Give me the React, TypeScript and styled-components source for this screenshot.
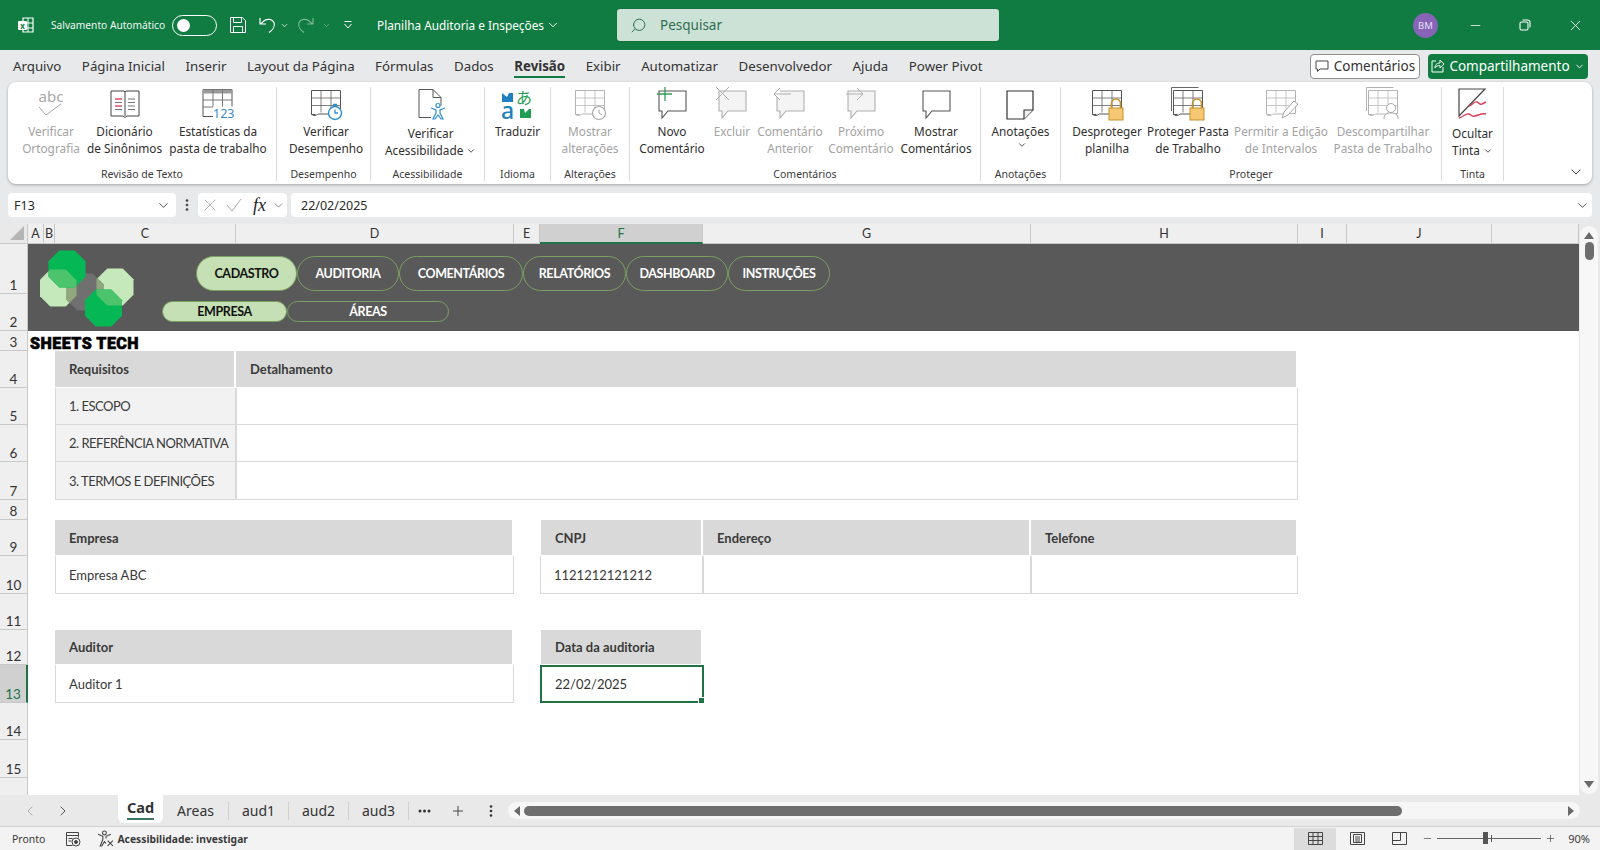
import { ReactNode } from "react";
import styled, { createGlobalStyle } from "styled-components";
import { ChevronDown, ChevronLeft, ChevronRight, Minus, Plus, Search, X } from "lucide-react";

const GlobalStyle = createGlobalStyle`
  html, body {
    margin: 0;
    padding: 0;
    background: #fff;
    overflow: hidden;
  }
  * { box-sizing: border-box; }
`;

const UI_FONT = `"Noto Sans", "Open Sans", sans-serif`;
const CELL_FONT = `Lato, "Noto Sans", sans-serif`;

const Page = styled.div`
  width: 1600px;
  height: 850px;
  display: flex;
  flex-direction: column;
  font-family: ${UI_FONT};
  color: #2b2b2b;
  background: #e8e9eb;
  overflow: hidden;
`;

/* ---------- title bar ---------- */
const TitleBar = styled.div`
  height: 50px;
  flex: none;
  background: #107c41;
  display: flex;
  align-items: center;
  color: #fff;
  padding-left: 17px;
`;

const AutoSave = styled.span`
  font-size: 10.2px;
  margin-left: 16px;
  width: 121px;
  white-space: nowrap;
  color: #eef6f1;
`;

const Toggle = styled.div`
  width: 45px;
  height: 21px;
  border: 1.2px solid #fff;
  border-radius: 11px;
  padding: 3px 4px;
`;

const ToggleKnob = styled.div`
  width: 13px;
  height: 13px;
  background: #fff;
  border-radius: 50%;
`;

const TitleIcon = styled.span<{ $left: number; $right?: number; $dim?: boolean }>`
  display: flex;
  align-items: center;
  margin-left: ${(p) => p.$left}px;
  margin-right: ${(p) => p.$right ?? 0}px;
  opacity: ${(p) => (p.$dim ? 0.45 : 1)};
`;

const DocName = styled.span`
  margin-left: 24px;
  font-size: 11.8px;
  width: 169px;
  white-space: nowrap;
`;

const SearchBox = styled.div`
  margin-left: 57px;
  width: 382px;
  height: 32px;
  background: #cde2d7;
  border-radius: 3px;
  box-shadow: 0 0 1px rgba(0, 0, 0, 0.5);
  display: flex;
  align-items: center;
  padding-left: 13px;
  gap: 13px;
  color: #2e6f50;
  font-size: 13.5px;
`;

const SearchGlyph = styled(Search)`
  transform: scaleX(-1);
`;

const Avatar = styled.div`
  margin-left: auto;
  margin-right: 12px;
  width: 25px;
  height: 25px;
  border-radius: 50%;
  background: #8764b8;
  display: flex;
  align-items: center;
  justify-content: center;
  font-size: 9.5px;
  color: #e8e0f2;
`;

const WindowButton = styled.div`
  width: 50px;
  height: 50px;
  display: flex;
  align-items: center;
  justify-content: center;
`;

/* ---------- tabs ---------- */
const TabRow = styled.div`
  height: 32px;
  flex: none;
  display: flex;
  align-items: center;
  padding: 0 12px 0 13px;
  gap: 20.5px;
  font-size: 13.3px;
  color: #333;
`;

const Tab = styled.span<{ $active?: boolean }>`
  position: relative;
  font-weight: ${(p) => (p.$active ? 700 : 400)};
  white-space: nowrap;
  &::after {
    content: "";
    display: ${(p) => (p.$active ? "block" : "none")};
    position: absolute;
    left: 0;
    right: 0;
    bottom: -3px;
    height: 2.5px;
    background: #107c41;
  }
`;

const TabActions = styled.div`
  margin-left: auto;
  display: flex;
  gap: 8px;
`;

const CommentsButton = styled.div`
  width: 110px;
  height: 25px;
  background: #fff;
  border: 1px solid #8f8f8f;
  border-radius: 4px;
  display: flex;
  align-items: center;
  justify-content: center;
  gap: 5px;
  font-size: 13.5px;
`;

const ShareButton = styled.div`
  width: 160px;
  height: 25px;
  background: #107c41;
  color: #fff;
  border-radius: 4px;
  display: flex;
  align-items: center;
  justify-content: center;
  gap: 4px;
  font-size: 13.5px;
`;

/* ---------- ribbon ---------- */
const Ribbon = styled.div`
  flex: none;
  height: 102px;
  margin: 0 8px;
  background: #fff;
  border-radius: 8px;
  box-shadow: 0 1px 3px rgba(0, 0, 0, 0.3);
  display: flex;
  padding: 5px 0 3px;
`;

const Group = styled.div<{ $width: number; $last?: boolean }>`
  width: ${(p) => p.$width}px;
  flex: none;
  position: relative;
  display: flex;
  flex-direction: column;
  border-right: ${(p) => (p.$last ? "none" : "1px solid #dcdcdc")};
`;

const GroupButtons = styled.div<{ $inset?: number }>`
  flex: 1;
  display: flex;
  justify-content: ${(p) => (p.$inset === undefined ? "center" : "flex-start")};
  padding-left: ${(p) => p.$inset ?? 0}px;
`;

const GroupLabel = styled.div`
  height: 14px;
  font-size: 10.5px;
  line-height: 14px;
  text-align: center;
  color: #3a3a3a;
`;

const RibbonButton = styled.div<{ $width?: number; $off?: boolean; $low?: boolean }>`
  width: ${(p) => (p.$width ? `${p.$width}px` : "auto")};
  flex: none;
  display: flex;
  flex-direction: column;
  align-items: center;
  font-size: 11.8px;
  line-height: 16.5px;
  color: ${(p) => (p.$off ? "#a3a3a3" : "#2f2f2f")};
  white-space: nowrap;
  & > svg {
    flex: none;
    margin-bottom: ${(p) => (p.$low ? "4px" : "2px")};
  }
`;

const Caret = styled.span`
  display: inline-flex;
  vertical-align: middle;
  margin-left: 3px;
`;

const Collapse = styled.div`
  position: absolute;
  right: 8px;
  bottom: 1px;
  display: flex;
`;

/* ---------- formula bar ---------- */
const FormulaBar = styled.div`
  flex: none;
  height: 40px;
  display: flex;
  align-items: flex-start;
  padding: 9px 8px 0;
`;

const NameBox = styled.div`
  width: 168px;
  height: 24px;
  background: #fff;
  border-radius: 4px;
  display: flex;
  align-items: center;
  justify-content: space-between;
  padding: 0 5px 0 6px;
  font-size: 12.5px;
`;

const Dots = styled.div`
  width: 22px;
  height: 24px;
  display: flex;
  align-items: center;
  justify-content: center;
`;

const FxBox = styled.div`
  width: 89px;
  height: 24px;
  background: #fff;
  border-radius: 4px;
  display: flex;
  align-items: center;
  padding-left: 2px;
  gap: 6px;
`;

const FxLabel = styled.span`
  font-family: "Liberation Serif", serif;
  font-style: italic;
  font-size: 18px;
  line-height: 20px;
  margin-left: 5px;
  color: #222;
`;

const FormulaInput = styled.div`
  margin-left: 4px;
  flex: 1;
  height: 24px;
  background: #fff;
  border-radius: 4px;
  display: flex;
  align-items: center;
  justify-content: space-between;
  padding: 0 2px 0 10px;
  font-size: 12.5px;
`;

/* ---------- sheet ---------- */
const SheetArea = styled.div`
  flex: none;
  height: 571px;
  display: flex;
  background: #fff;
`;

const SheetGrid = styled.div`
  width: 1579px;
  height: 571px;
  display: grid;
  grid-template-columns: 28px 16px 11px 181px 278px 26px 163px 328px 267px 49px 145px 87px;
  grid-template-rows: 20px 50px 37px 20px 37px 37px 37px 38px 20px 36px 38px 36px 35px 38px 37px 38px 38px;
  overflow: hidden;
`;

const Corner = styled.div`
  grid-column: 1;
  grid-row: 1;
  background: #e9e9e9;
  border-right: 1px solid #c8c8c8;
  border-bottom: 1px solid #c8c8c8;
  display: flex;
  align-items: flex-end;
  justify-content: flex-end;
  padding: 0 3px 3px 0;
`;

const ColHeader = styled.div<{ $col: number; $selected?: boolean }>`
  grid-column: ${(p) => p.$col};
  grid-row: 1;
  background: ${(p) => (p.$selected ? "#d0d0d0" : "#efefef")};
  border-right: 1px solid #c8c8c8;
  border-bottom: ${(p) => (p.$selected ? "2px solid #217346" : "1px solid #c8c8c8")};
  font-family: ${CELL_FONT};
  font-size: 12.5px;
  line-height: 19px;
  text-align: center;
  color: ${(p) => (p.$selected ? "#217346" : "#333")};
`;

const RowHeader = styled.div<{ $row: number; $selected?: boolean }>`
  grid-column: 1;
  grid-row: ${(p) => p.$row};
  background: ${(p) => (p.$selected ? "#d0d0d0" : "#efefef")};
  border-right: ${(p) => (p.$selected ? "2px solid #217346" : "1px solid #c8c8c8")};
  border-bottom: 1px solid #c8c8c8;
  font-family: ${CELL_FONT};
  font-size: 13.5px;
  color: ${(p) => (p.$selected ? "#217346" : "#333")};
  display: flex;
  align-items: flex-end;
  justify-content: center;
  overflow: hidden;
`;

const Banner = styled.div`
  grid-column: 2 / -1;
  grid-row: 2 / 4;
  background: #595959;
  display: flex;
  padding: 5px 0 0 12px;
`;

const Logo = styled.svg`
  flex: none;
  width: 95px;
  height: 80px;
`;

const PillStack = styled.div`
  margin-left: 27px;
  display: flex;
  flex-direction: column;
  gap: 10px;
  padding-top: 7px;
`;

const PillRow = styled.div<{ $indent: number }>`
  display: flex;
  margin-left: ${(p) => p.$indent}px;
`;

const Pill = styled.div<{ $width: number; $on?: boolean; $small?: boolean }>`
  width: ${(p) => p.$width}px;
  height: ${(p) => (p.$small ? 21 : 35)}px;
  border-radius: 18px;
  border: 1px solid #7a9f62;
  background: ${(p) => (p.$on ? "#c5e0b4" : "transparent")};
  color: ${(p) => (p.$on ? "#111" : "#fff")};
  font-family: ${CELL_FONT};
  font-weight: 700;
  font-size: 12.5px;
  letter-spacing: -0.4px;
  display: flex;
  align-items: center;
  justify-content: center;
`;

const BrandCell = styled.div`
  grid-column: 2 / 6;
  grid-row: 4;
  padding: 1px 0 0 2px;
  font-family: Roboto, "Liberation Sans", sans-serif;
  font-weight: 900;
  font-size: 16px;
  line-height: 23px;
  letter-spacing: 0.5px;
  color: #000;
  -webkit-text-stroke: 0.6px #000;
  white-space: nowrap;
`;

const Cell = styled.div<{ $col: string; $row: number; $kind: "head" | "label" | "plain" }>`
  grid-column: ${(p) => p.$col};
  grid-row: ${(p) => p.$row};
  display: flex;
  align-items: center;
  padding-left: ${(p) => (p.$kind === "head" ? 14 : 13)}px;
  font-family: ${CELL_FONT};
  font-size: 13px;
  white-space: nowrap;
  color: #3a3a3a;
  letter-spacing: ${(p) => (p.$kind === "label" ? "-0.5px" : "0")};
  font-weight: ${(p) => (p.$kind === "head" ? 700 : 400)};
  background: ${(p) => (p.$kind === "head" ? "#d9d9d9" : p.$kind === "label" ? "#f2f2f2" : "#fff")};
  ${(p) =>
    p.$kind === "head"
      ? `border-right: 2px solid #fff; border-bottom: 1px solid #fff; border-left: ${p.$col === "7" ? "1px" : "0"} solid #fff;`
      : "border: 1px solid #d9d9d9; border-top: none;"}
`;

const ActiveCell = styled.div`
  grid-column: 7;
  grid-row: 14;
  position: relative;
  margin-right: -1px;
  border: 2px solid #217346;
  display: flex;
  align-items: center;
  padding-left: 13px;
  font-family: ${CELL_FONT};
  font-size: 13px;
  color: #333;
  &::after {
    content: "";
    position: absolute;
    right: -3px;
    bottom: -3px;
    width: 5px;
    height: 5px;
    background: #217346;
    border: 1px solid #fff;
  }
`;

const VScroll = styled.div`
  width: 21px;
  display: flex;
  background: #e9e9e9;
  padding: 2px 2px 1px 1px;
`;

const VTrack = styled.div`
  flex: 1;
  display: flex;
  flex-direction: column;
  align-items: center;
  background: #f7f7f7;
  border-radius: 9px;
  padding: 6px 0 6px;
`;

const VThumb = styled.div`
  width: 9px;
  height: 18px;
  border-radius: 5px;
  background: #6e6e6e;
  margin-top: 3px;
`;

const Arrow = styled.div<{ $dir: "up" | "down" | "left" | "right" }>`
  width: 0;
  height: 0;
  flex: none;
  ${(p) =>
    p.$dir === "up"
      ? "border-left: 5px solid transparent; border-right: 5px solid transparent; border-bottom: 7px solid #6a6a6a;"
      : p.$dir === "down"
      ? "border-left: 5px solid transparent; border-right: 5px solid transparent; border-top: 7px solid #6a6a6a;"
      : p.$dir === "left"
      ? "border-top: 5px solid transparent; border-bottom: 5px solid transparent; border-right: 6px solid #6a6a6a;"
      : "border-top: 5px solid transparent; border-bottom: 5px solid transparent; border-left: 6px solid #6a6a6a;"}
`;

const Spacer = styled.div`
  flex: 1;
`;

/* ---------- sheet tabs ---------- */
const SheetTabsBar = styled.div`
  flex: none;
  height: 32px;
  display: flex;
  align-items: center;
  background: #e9e9e9;
  border-bottom: 1px solid #d2d2d2;
`;

const NavArrows = styled.div`
  width: 118px;
  display: flex;
  padding-left: 22px;
  gap: 17px;
  flex: none;
`;

const SheetTab = styled.div<{ $width: number; $active?: boolean }>`
  width: ${(p) => p.$width}px;
  height: ${(p) => (p.$active ? "28px" : "18px")};
  flex: none;
  align-self: ${(p) => (p.$active ? "flex-start" : "center")};
  padding-bottom: ${(p) => (p.$active ? "4px" : "0")};
  display: flex;
  align-items: center;
  justify-content: center;
  position: relative;
  font-size: ${(p) => (p.$active ? "14.5px" : "14px")};
  font-weight: ${(p) => (p.$active ? 700 : 400)};
  color: #333;
  background: ${(p) => (p.$active ? "#fff" : "transparent")};
  border-radius: ${(p) => (p.$active ? "0 0 6px 6px" : "0")};
  border-right: ${(p) => (p.$active ? "none" : "1px solid #d0d0d0")};
  ${(p) =>
    p.$active &&
    `&::after {
      content: "";
      position: absolute;
      left: 9px;
      right: 9px;
      bottom: 3px;
      height: 2px;
      background: #3d7560;
    }`}
`;

const TabTool = styled.div<{ $left: number }>`
  margin-left: ${(p) => p.$left}px;
  display: flex;
  align-items: center;
  justify-content: center;
  width: 16px;
  flex: none;
  color: #333;
`;

const HScroll = styled.div`
  margin-left: 9px;
  width: 1072px;
  height: 17px;
  background: #f6f6f6;
  border-radius: 9px;
  display: flex;
  align-items: center;
  padding: 0 6px;
  flex: none;
`;

const HThumb = styled.div`
  margin-left: 4px;
  width: 878px;
  height: 10px;
  border-radius: 5px;
  background: #6e6e6e;
`;

/* ---------- status bar ---------- */
const StatusBar = styled.div`
  flex: 1;
  display: flex;
  align-items: center;
  background: #f3f3f3;
  font-size: 10.5px;
  padding-left: 12px;
`;

const StatusText = styled.span<{ $bold?: boolean }>`
  font-weight: ${(p) => (p.$bold ? 700 : 400)};
  font-size: ${(p) => (p.$bold ? "10.3px" : "10.5px")};
  color: #3a3a3a;
  white-space: nowrap;
`;

const ViewButton = styled.div<{ $on?: boolean }>`
  width: 42px;
  height: 22px;
  flex: none;
  display: flex;
  align-items: center;
  justify-content: center;
  background: ${(p) => (p.$on ? "#dcdcdc" : "transparent")};
`;

const ZoomControl = styled.div`
  margin-left: auto;
  display: flex;
  align-items: center;
  height: 100%;
`;

const ZoomMinus = styled(Minus)`
  margin-left: 2px;
`;

const SliderTrack = styled.div`
  position: relative;
  width: 104px;
  height: 1px;
  background: #666;
  margin: 0 4px;
`;

const SliderKnob = styled.div`
  position: absolute;
  left: 46px;
  top: -6px;
  width: 5px;
  height: 12px;
  background: #555;
`;

const SliderTick = styled.div`
  position: absolute;
  left: 54px;
  top: -3px;
  width: 1px;
  height: 7px;
  background: #555;
`;

const ZoomValue = styled.span`
  width: 42px;
  text-align: center;
  margin-left: 2px;
  color: #3a3a3a;
  font-size: 11px;
`;

/* ---------- drawings ---------- */
type IconProps = { c?: string };

const Svg = ({ children }: { children: ReactNode }) => (
  <svg width={34} height={34} viewBox="0 0 34 34" fill="none" overflow="visible">
    {children}
  </svg>
);

const SheetLines = ({ c = "#555" }: IconProps) => (
  <>
    <path d="M2.5 3.500h29v23H25M2.500 3.500v24h4" stroke={c} />
    <path d="M2.500 11h29M2.500 18.500h29M12 3.500v22M22 3.500v23" stroke={c} opacity="0.75" />
    <path d="M2.500 27c2 3 5 1 7 0h12" stroke={c} />
  </>
);

const Lock = () => (
  <>
    <rect x="19" y="21" width="14" height="12" fill="#f6c874" stroke="#c78f2c" />
    <path d="M21.500 21v-4.500a4.500 4.500 0 0 1 9 0V21" stroke="#c78f2c" strokeWidth="1.6" />
  </>
);

const Bubble = ({ c = "#555", fill = "none" }: IconProps & { fill?: string }) => (
  <path d="M4 4h27v20H13l-6 7v-7H4z" stroke={c} fill={fill} strokeWidth="1.1" />
);

const icons = {
  abc: (
    <Svg>
      <text x="17" y="15" textAnchor="middle" fontFamily="Noto Sans" fontSize="15" fill="#a8a8a8">
        abc
      </text>
      <path d="M5 20l7 8L27 17" stroke="#a8a8a8" />
    </Svg>
  ),
  book: (
    <Svg>
      <path d="M3 4h13l1 1 1-1h13v25H19l-2 1.500L15 29H3z" stroke="#444" />
      <path d="M17 5v24" stroke="#444" />
      <path d="M7 12h7M7 19h7" stroke="#e0506a" strokeWidth="1.3" />
      <path d="M7 15.500h7M7 22.500h7M20 12h7M20 15.500h7M20 19h7M20 22.500h7" stroke="#777" strokeWidth="1.2" />
    </Svg>
  ),
  stats: (
    <Svg>
      <path d="M2 2.500h29M2 2.500v27h10M31 2.500v17" stroke="#555" />
      <rect x="2" y="2.500" width="29" height="4" fill="#9a9a9a" />
      <path d="M2 13h29M2 20h10M12 2.500v17M21.500 2.500v17" stroke="#777" />
      <text x="12" y="31" fontFamily="Noto Sans" fontSize="12.5" fill="#3c8ac4">
        123
      </text>
    </Svg>
  ),
  perf: (
    <Svg>
      <SheetLines />
      <circle cx="26" cy="26" r="6.500" fill="#fff" stroke="#2f8fce" strokeWidth="1.4" />
      <path d="M26 22.500V26h3M24 17.500h4M26 17.500v2" stroke="#2f8fce" strokeWidth="1.3" />
    </Svg>
  ),
  access: (
    <Svg>
      <path d="M5 2.500h14l8 8v8M5 2.500v28h12M19 2.500v8h8" stroke="#555" />
      <circle cx="24" cy="18.500" r="2" stroke="#2f8fce" strokeWidth="1.2" />
      <path d="M17 21l5 2v3l-3 6h2l3-4 3 4h2l-3-6v-3l5-2" stroke="#2f8fce" strokeWidth="1.2" />
    </Svg>
  ),
  translate: (
    <Svg>
      <path d="M2 6l5 4 2-4h4v9H2z" fill="#1f7fc1" />
      <text x="16" y="17" fontFamily="Noto Sans CJK JP" fontSize="16" fill="#1f9d55">
        あ
      </text>
      <text x="1" y="32" fontFamily="Noto Sans" fontWeight="500" fontSize="23" fill="#1f7fc1">
        a
      </text>
      <path d="M31 31H20v-9h4l1 4 4-4h2z" fill="#1f9d55" />
    </Svg>
  ),
  changes: (
    <Svg>
      <SheetLines c="#b4b4b4" />
      <circle cx="26" cy="26" r="6.500" fill="#fff" stroke="#a8a8a8" strokeWidth="1.2" />
      <path d="M26 22.500V26l3 2" stroke="#a8a8a8" />
    </Svg>
  ),
  newComment: (
    <Svg>
      <Bubble />
      <path d="M10 0v14M2 7h15" stroke="#2e9e5b" strokeWidth="1.3" />
    </Svg>
  ),
  delComment: (
    <Svg>
      <Bubble c="#b0b0b0" fill="#f4f4f4" />
      <path d="M1 0l13 13M14 0L1 13" stroke="#b0b0b0" />
    </Svg>
  ),
  prevComment: (
    <Svg>
      <Bubble c="#b0b0b0" fill="#f4f4f4" />
      <path d="M1 7h17M7 1L1 7l6 6" stroke="#b0b0b0" fill="#fff" />
    </Svg>
  ),
  nextComment: (
    <Svg>
      <Bubble c="#b0b0b0" fill="#f4f4f4" />
      <path d="M2 7h17M13 1l6 6-6 6" stroke="#b0b0b0" />
    </Svg>
  ),
  showComment: (
    <Svg>
      <Bubble />
    </Svg>
  ),
  note: (
    <Svg>
      <path d="M4 4h26v19l-9 9H4z" stroke="#333" strokeWidth="1.2" />
      <path d="M30 23h-9v9" fill="#efefef" stroke="#333" strokeWidth="1.1" />
    </Svg>
  ),
  unprotect: (
    <Svg>
      <SheetLines />
      <Lock />
    </Svg>
  ),
  protect: (
    <Svg>
      <path d="M0.500 24V0.500h27" stroke="#666" />
      <SheetLines />
      <Lock />
    </Svg>
  ),
  allow: (
    <Svg>
      <SheetLines c="#b4b4b4" />
      <path d="M18 31l2-6 10-11 4 3-10 11z" fill="#fff" stroke="#a8a8a8" />
    </Svg>
  ),
  unshare: (
    <Svg>
      <path d="M0.500 24V0.500h27" stroke="#b4b4b4" />
      <SheetLines c="#b4b4b4" />
      <circle cx="25" cy="21" r="4.500" fill="#fff" stroke="#a8a8a8" />
      <path d="M18 32c0-5 3-6 7-6s7 1 7 6" fill="#fff" stroke="#a8a8a8" />
    </Svg>
  ),
  ink: (
    <Svg>
      <path d="M3 2h26L3 29z" stroke="#444" strokeWidth="1.2" />
      <path d="M13 19c4-1 5-5 8-4s2 3 5 2l4-2" stroke="#d8405a" strokeWidth="1.4" />
      <path d="M3 31c4-1 7-5 10-4s2 3 6 2 7-3 11-2" stroke="#d8405a" strokeWidth="1.4" />
    </Svg>
  ),
};

const SmallCaret = () => (
  <Caret>
    <ChevronDown size={10} strokeWidth={2} />
  </Caret>
);

const Tabs = [
  "Arquivo",
  "Página Inicial",
  "Inserir",
  "Layout da Página",
  "Fórmulas",
  "Dados",
  "Revisão",
  "Exibir",
  "Automatizar",
  "Desenvolvedor",
  "Ajuda",
  "Power Pivot",
];

const columns = ["A", "B", "C", "D", "E", "F", "G", "H", "I", "J"];

const rowNumbers = [1, 2, 3, 4, 5, 6, 7, 8, 9, 10, 11, 12, 13, 14, 15];

const cells: { col: string; row: number; kind: "head" | "label" | "plain"; text?: string }[] = [
  { col: "4", row: 5, kind: "head", text: "Requisitos" },
  { col: "5 / 10", row: 5, kind: "head", text: "Detalhamento" },
  { col: "4", row: 6, kind: "label", text: "1. ESCOPO" },
  { col: "5 / 10", row: 6, kind: "plain" },
  { col: "4", row: 7, kind: "label", text: "2. REFERÊNCIA NORMATIVA" },
  { col: "5 / 10", row: 7, kind: "plain" },
  { col: "4", row: 8, kind: "label", text: "3. TERMOS E DEFINIÇÕES" },
  { col: "5 / 10", row: 8, kind: "plain" },
  { col: "4 / 6", row: 10, kind: "head", text: "Empresa" },
  { col: "7", row: 10, kind: "head", text: "CNPJ" },
  { col: "8", row: 10, kind: "head", text: "Endereço" },
  { col: "9", row: 10, kind: "head", text: "Telefone" },
  { col: "4 / 6", row: 11, kind: "plain", text: "Empresa ABC" },
  { col: "7", row: 11, kind: "plain", text: "1121212121212" },
  { col: "8", row: 11, kind: "plain" },
  { col: "9", row: 11, kind: "plain" },
  { col: "4 / 6", row: 13, kind: "head", text: "Auditor" },
  { col: "7", row: 13, kind: "head", text: "Data da auditoria" },
  { col: "4 / 6", row: 14, kind: "plain", text: "Auditor 1" },
];

const octagonPoints = (x: number, y: number, r: number) => {
  const k = r * 0.42;
  return `${x - k},${y - r} ${x + k},${y - r} ${x + r},${y - k} ${x + r},${y + k} ${x + k},${y + r} ${x - k},${y + r} ${x - r},${y + k} ${x - r},${y - k}`;
};

const leftOct = octagonPoints(18, 39, 18.5);
const rightOct = octagonPoints(75, 38, 18.5);
const grayOct = octagonPoints(45, 43, 18.5);
const topOct = octagonPoints(27, 20, 18.5);
const bottomOct = octagonPoints(63.5, 59, 18.5);

const BrandLogo = () => (
  <Logo viewBox="0 0 95 80">
    <defs>
      <clipPath id="clip-left">
        <polygon points={leftOct} />
      </clipPath>
      <clipPath id="clip-right">
        <polygon points={rightOct} />
      </clipPath>
    </defs>
    <polygon points={leftOct} fill="#c6e9bb" />
    <polygon points={rightOct} fill="#c6e9bb" />
    <polygon points={grayOct} fill="#707070" />
    <polygon points={grayOct} fill="#8fa97d" clipPath="url(#clip-left)" />
    <polygon points={grayOct} fill="#8fa97d" clipPath="url(#clip-right)" />
    <polygon points={topOct} fill="#06b755" />
    <polygon points={topOct} fill="#4cc46c" clipPath="url(#clip-left)" />
    <polygon points={bottomOct} fill="#06b755" />
    <polygon points={bottomOct} fill="#4cc46c" clipPath="url(#clip-right)" />
  </Logo>
);

export default function App() {
  return (
    <Page>
      <GlobalStyle />
      <TitleBar>
        <svg width="18" height="18" viewBox="0 0 18 18" fill="none">
          <path d="M6 2h10v14H6z" stroke="#fff" strokeWidth="1.2" />
          <path d="M11 2v14M6 7h10M6 12h10" stroke="#fff" />
          <rect x="1" y="5" width="9" height="9" rx="1" fill="#fff" />
          <text x="5.500" y="12.500" textAnchor="middle" fontSize="8" fontFamily="Noto Sans" fontWeight="700" fill="#107c41">
            x
          </text>
        </svg>
        <AutoSave>Salvamento Automático</AutoSave>
        <Toggle>
          <ToggleKnob />
        </Toggle>
        <TitleIcon $left={12}>
          <svg width="18" height="18" viewBox="0 0 18 18" fill="none" stroke="#fff">
            <path d="M1.500 1.500h12l3 3v12h-15z" />
            <path d="M4.500 1.500v5h8v-5M4.500 16.500v-6h9v6" />
          </svg>
        </TitleIcon>
        <TitleIcon $left={12}>
          <svg width="20" height="18" viewBox="0 0 20 18" fill="none" stroke="#fff" strokeWidth="1.2">
            <path d="M1 2v6h6M1.500 8l4-3.500c3-2 8-1.500 9.500 2 1.500 4-2 8-5 10" />
          </svg>
        </TitleIcon>
        <TitleIcon $left={1}>
          <ChevronDown size={9} strokeWidth={2} />
        </TitleIcon>
        <TitleIcon $left={5} $dim>
          <svg width="20" height="18" viewBox="0 0 20 18" fill="none" stroke="#fff" strokeWidth="1.2">
            <path d="M19 2v6h-6M18.500 8l-4-3.500c-3-2-8-1.500-9.500 2-1.500 4 2 8 5 10" />
          </svg>
        </TitleIcon>
        <TitleIcon $left={8} $dim>
          <ChevronDown size={9} strokeWidth={2} />
        </TitleIcon>
        <TitleIcon $left={12}>
          <svg width="10" height="10" viewBox="0 0 10 10" fill="none" stroke="#fff">
            <path d="M1.500 1.500h7M1.500 4l3.500 4 3.500-4" />
          </svg>
        </TitleIcon>
        <DocName>Planilha Auditoria e Inspeções</DocName>
        <TitleIcon $left={0}>
          <ChevronDown size={14} strokeWidth={1.6} />
        </TitleIcon>
        <SearchBox>
          <SearchGlyph size={17} strokeWidth={1.4} />
          Pesquisar
        </SearchBox>
        <Avatar>BM</Avatar>
        <WindowButton>
          <Minus size={15} strokeWidth={1.2} />
        </WindowButton>
        <WindowButton>
          <svg width="12" height="12" viewBox="0 0 12 12" fill="none" stroke="#fff" strokeWidth="1.1">
            <rect x="1" y="3" width="8" height="8" rx="1.500" />
            <path d="M3.500 1h5a2.500 2.500 0 0 1 2.500 2.500v5" />
          </svg>
        </WindowButton>
        <WindowButton>
          <X size={17} strokeWidth={1.2} />
        </WindowButton>
      </TitleBar>

      <TabRow>
        {Tabs.map((t) => (
          <Tab key={t} $active={t === "Revisão"}>
            {t}
          </Tab>
        ))}
        <TabActions>
          <CommentsButton>
            <svg width="14" height="14" viewBox="0 0 14 14" fill="none" stroke="#444">
              <path d="M1 2h12v8H5l-2.500 2.500V10H1z" />
            </svg>
            Comentários
          </CommentsButton>
          <ShareButton>
            <svg width="14" height="14" viewBox="0 0 14 14" fill="none" stroke="#fff">
              <path d="M5 2H1v11h11V8M4 9c0-4 3-5 5-5V1l4 4-4 4V6.500C7 6.500 5 7 4 9z" />
            </svg>
            Compartilhamento
            <ChevronDown size={11} strokeWidth={2} />
          </ShareButton>
        </TabActions>
      </TabRow>

      <Ribbon>
        <Group $width={269}>
          <GroupButtons $inset={10}>
            <RibbonButton $width={66} $off>
              {icons.abc}
              <span>Verificar</span>
              <span>Ortografia</span>
            </RibbonButton>
            <RibbonButton $width={81}>
              {icons.book}
              <span>Dicionário</span>
              <span>de Sinônimos</span>
            </RibbonButton>
            <RibbonButton $width={106}>
              {icons.stats}
              <span>Estatísticas da</span>
              <span>pasta de trabalho</span>
            </RibbonButton>
          </GroupButtons>
          <GroupLabel>Revisão de Texto</GroupLabel>
        </Group>
        <Group $width={94}>
          <GroupButtons $inset={12}>
            <RibbonButton>
              {icons.perf}
              <span>Verificar</span>
              <span>Desempenho</span>
            </RibbonButton>
          </GroupButtons>
          <GroupLabel>Desempenho</GroupLabel>
        </Group>
        <Group $width={114}>
          <GroupButtons $inset={14}>
            <RibbonButton $low>
              {icons.access}
              <span>Verificar</span>
              <span>
                Acessibilidade
                <SmallCaret />
              </span>
            </RibbonButton>
          </GroupButtons>
          <GroupLabel>Acessibilidade</GroupLabel>
        </Group>
        <Group $width={66}>
          <GroupButtons>
            <RibbonButton>
              {icons.translate}
              <span>Traduzir</span>
            </RibbonButton>
          </GroupButtons>
          <GroupLabel>Idioma</GroupLabel>
        </Group>
        <Group $width={79}>
          <GroupButtons>
            <RibbonButton $off>
              {icons.changes}
              <span>Mostrar</span>
              <span>alterações</span>
            </RibbonButton>
          </GroupButtons>
          <GroupLabel>Alterações</GroupLabel>
        </Group>
        <Group $width={351}>
          <GroupButtons $inset={6}>
            <RibbonButton $width={72}>
              {icons.newComment}
              <span>Novo</span>
              <span>Comentário</span>
            </RibbonButton>
            <RibbonButton $width={48} $off>
              {icons.delComment}
              <span>Excluir</span>
            </RibbonButton>
            <RibbonButton $width={68} $off>
              {icons.prevComment}
              <span>Comentário</span>
              <span>Anterior</span>
            </RibbonButton>
            <RibbonButton $width={74} $off>
              {icons.nextComment}
              <span>Próximo</span>
              <span>Comentário</span>
            </RibbonButton>
            <RibbonButton $width={76}>
              {icons.showComment}
              <span>Mostrar</span>
              <span>Comentários</span>
            </RibbonButton>
          </GroupButtons>
          <GroupLabel>Comentários</GroupLabel>
        </Group>
        <Group $width={80}>
          <GroupButtons>
            <RibbonButton>
              {icons.note}
              <span>Anotações</span>
              <SmallCaret />
            </RibbonButton>
          </GroupButtons>
          <GroupLabel>Anotações</GroupLabel>
        </Group>
        <Group $width={381}>
          <GroupButtons $inset={6}>
            <RibbonButton $width={80}>
              {icons.unprotect}
              <span>Desproteger</span>
              <span>planilha</span>
            </RibbonButton>
            <RibbonButton $width={82}>
              {icons.protect}
              <span>Proteger Pasta</span>
              <span>de Trabalho</span>
            </RibbonButton>
            <RibbonButton $width={104} $off>
              {icons.allow}
              <span>Permitir a Edição</span>
              <span>de Intervalos</span>
            </RibbonButton>
            <RibbonButton $width={100} $off>
              {icons.unshare}
              <span>Descompartilhar</span>
              <span>Pasta de Trabalho</span>
            </RibbonButton>
          </GroupButtons>
          <GroupLabel>Proteger</GroupLabel>
        </Group>
        <Group $width={62}>
          <GroupButtons>
            <RibbonButton $low>
              {icons.ink}
              <span>Ocultar</span>
              <span>
                Tinta
                <SmallCaret />
              </span>
            </RibbonButton>
          </GroupButtons>
          <GroupLabel>Tinta</GroupLabel>
        </Group>
        <Group $width={88} $last>
          <Collapse>
            <ChevronDown size={16} strokeWidth={1.4} />
          </Collapse>
        </Group>
      </Ribbon>

      <FormulaBar>
        <NameBox>
          F13
          <ChevronDown size={15} strokeWidth={1.3} />
        </NameBox>
        <Dots>
          <svg width="4" height="14" viewBox="0 0 4 14" fill="#444">
            <circle cx="2" cy="2.500" r="1.300" />
            <circle cx="2" cy="7" r="1.300" />
            <circle cx="2" cy="11.500" r="1.300" />
          </svg>
        </Dots>
        <FxBox>
          <X size={20} strokeWidth={1} color="#a8a8a8" />
          <svg width="16" height="14" viewBox="0 0 16 14" fill="none" stroke="#a8a8a8">
            <path d="M1 7l5 6L15 1" />
          </svg>
          <FxLabel>fx</FxLabel>
          <ChevronDown size={13} strokeWidth={1} />
        </FxBox>
        <FormulaInput>
          22/02/2025
          <ChevronDown size={15} strokeWidth={1.3} />
        </FormulaInput>
      </FormulaBar>

      <SheetArea>
        <SheetGrid>
          <Corner>
            <svg width="14" height="14" viewBox="0 0 14 14">
              <path d="M14 0v14H0z" fill="#b5b5b5" />
            </svg>
          </Corner>
          {columns.map((c, i) => (
            <ColHeader key={c} $col={i + 2} $selected={c === "F"}>
              {c}
            </ColHeader>
          ))}
          <ColHeader $col={12} />
          {rowNumbers.map((n) => (
            <RowHeader key={n} $row={n + 1} $selected={n === 13}>
              {n}
            </RowHeader>
          ))}
          <RowHeader $row={17} />
          <Banner>
            <BrandLogo />
            <PillStack>
              <PillRow $indent={34}>
                <Pill $width={101} $on>CADASTRO</Pill>
                <Pill $width={102}>AUDITORIA</Pill>
                <Pill $width={124}>COMENTÁRIOS</Pill>
                <Pill $width={103}>RELATÓRIOS</Pill>
                <Pill $width={102}>DASHBOARD</Pill>
                <Pill $width={102}>INSTRUÇÕES</Pill>
              </PillRow>
              <PillRow $indent={0}>
                <Pill $width={125} $on $small>EMPRESA</Pill>
                <Pill $width={162} $small>ÁREAS</Pill>
              </PillRow>
            </PillStack>
          </Banner>
          <BrandCell>SHEETS TECH</BrandCell>
          {cells.map((c) => (
            <Cell key={`${c.col}-${c.row}`} $col={c.col} $row={c.row} $kind={c.kind}>
              {c.text}
            </Cell>
          ))}
          <ActiveCell>22/02/2025</ActiveCell>
        </SheetGrid>
        <VScroll>
          <VTrack>
            <Arrow $dir="up" />
            <VThumb />
            <Spacer />
            <Arrow $dir="down" />
          </VTrack>
        </VScroll>
      </SheetArea>

      <SheetTabsBar>
        <NavArrows>
          <ChevronLeft size={16} strokeWidth={1.2} color="#9a9a9a" />
          <ChevronRight size={16} strokeWidth={1.2} color="#333" />
        </NavArrows>
        <SheetTab $width={45} $active>Cad</SheetTab>
        <SheetTab $width={66}>Areas</SheetTab>
        <SheetTab $width={60}>aud1</SheetTab>
        <SheetTab $width={60}>aud2</SheetTab>
        <SheetTab $width={60}>aud3</SheetTab>
        <TabTool $left={7}>
          <svg width="13" height="4" viewBox="0 0 13 4" fill="#333">
            <circle cx="2" cy="2" r="1.500" />
            <circle cx="6.500" cy="2" r="1.500" />
            <circle cx="11" cy="2" r="1.500" />
          </svg>
        </TabTool>
        <TabTool $left={18}>
          <Plus size={16} strokeWidth={1.3} />
        </TabTool>
        <TabTool $left={17}>
          <svg width="4" height="14" viewBox="0 0 4 14" fill="#333">
            <circle cx="2" cy="2.500" r="1.300" />
            <circle cx="2" cy="7" r="1.300" />
            <circle cx="2" cy="11.500" r="1.300" />
          </svg>
        </TabTool>
        <HScroll>
          <Arrow $dir="left" />
          <HThumb />
          <Spacer />
          <Arrow $dir="right" />
        </HScroll>
      </SheetTabsBar>

      <StatusBar>
        <StatusText>Pronto</StatusText>
        <TitleIcon $left={20}>
          <svg width="16" height="16" viewBox="0 0 16 16" fill="none" stroke="#444">
            <path d="M1.500 1.500h12v5M1.500 1.500v13h6M1.500 4.500h12M3.500 7.500h4M3.500 10h3" />
            <circle cx="11" cy="11" r="4" />
            <circle cx="11" cy="11" r="1.500" fill="#444" />
          </svg>
        </TitleIcon>
        <TitleIcon $left={16} $right={3}>
          <svg width="17" height="17" viewBox="0 0 16 16" fill="none" stroke="#444">
            <circle cx="7" cy="2.800" r="1.800" />
            <path d="M1 4l4.500 2v3l-2.500 6h1.500L7 11l1.500 1.500M13 4L8.500 6v2" />
            <path d="M10 10l5 5M15 10l-5 5" />
          </svg>
        </TitleIcon>
        <StatusText $bold>Acessibilidade: investigar</StatusText>
        <ZoomControl>
          <ViewButton $on>
            <svg width="15" height="13" viewBox="0 0 15 13" fill="none" stroke="#444">
              <path d="M.5.500h14v12H.5zM.5 4.500h14M.5 8.500h14M5 .500v12M10 .500v12" />
            </svg>
          </ViewButton>
          <ViewButton>
            <svg width="15" height="13" viewBox="0 0 15 13" fill="none" stroke="#444">
              <path d="M.5.500h14v12H.5zM3.500 2.500h8v8h-8zM5 5h5M5 7h5M5 9h5" />
            </svg>
          </ViewButton>
          <ViewButton>
            <svg width="15" height="13" viewBox="0 0 15 13" fill="none" stroke="#444">
              <path d="M.5.500h14v12H.5zM.500 8.500h8v-8" />
            </svg>
          </ViewButton>
          <ZoomMinus size={11} strokeWidth={1.3} />
          <SliderTrack>
            <SliderKnob />
            <SliderTick />
          </SliderTrack>
          <Plus size={11} strokeWidth={1.3} />
          <ZoomValue>90%</ZoomValue>
        </ZoomControl>
      </StatusBar>
    </Page>
  );
}
